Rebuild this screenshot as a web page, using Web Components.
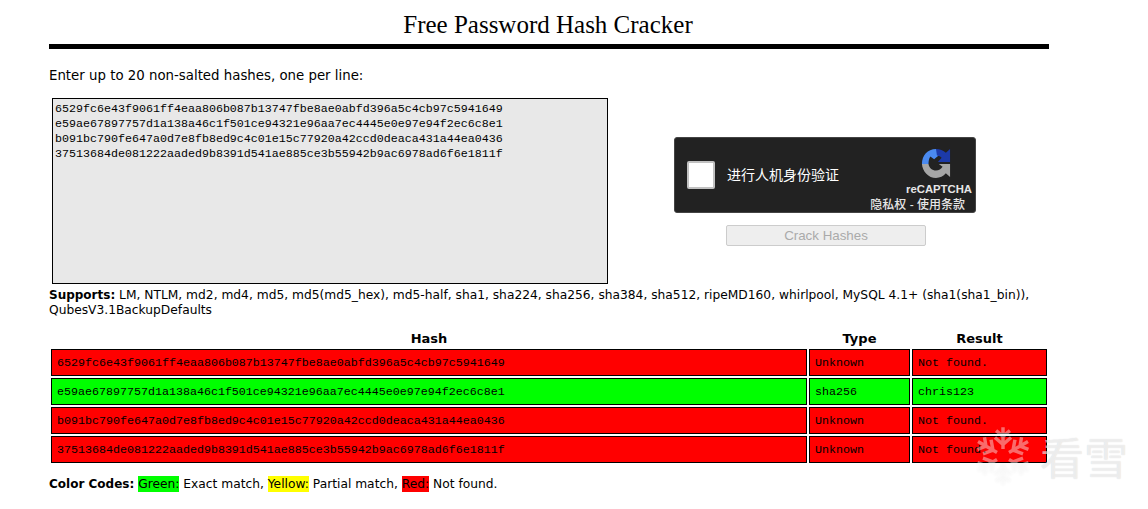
<!DOCTYPE html>
<html lang="en">
<head>
<meta charset="utf-8">
<title>Free Password Hash Cracker</title>
<style>
    html, body { margin: 0; background: #fff; }
    body { font-family: "DejaVu Sans", sans-serif; font-size: 12.26px; color: #000; }
</style>
</head>
<body>
<cracker-page>
    <page-title>Free Password Hash Cracker</page-title>
    <hash-form></hash-form>
    <supports-note></supports-note>
    <hash-results></hash-results>
    <color-codes></color-codes>
</cracker-page>
<snow-watermark></snow-watermark>

<script>
const HASHES = [
    '6529fc6e43f9061ff4eaa806b087b13747fbe8ae0abfd396a5c4cb97c5941649',
    'e59ae67897757d1a138a46c1f501ce94321e96aa7ec4445e0e97e94f2ec6c8e1',
    'b091bc790fe647a0d7e8fb8ed9c4c01e15c77920a42ccd0deaca431a44ea0436',
    '37513684de081222aaded9b8391d541ae885ce3b55942b9ac6978ad6f6e1811f'
];

class CrackerPage extends HTMLElement {
    constructor() {
        super();
        this.attachShadow({ mode: 'open' });
        this.shadowRoot.innerHTML = `
            <style>
                :host { display: block; width: 1000px; margin-left: 49px; }
            </style>
            <slot></slot>
        `;
    }
}

class PageTitle extends HTMLElement {
    constructor() {
        super();
        this.attachShadow({ mode: 'open' });
        this.shadowRoot.innerHTML = `
            <style>
                :host { display: block; height: 44px; padding-right: 2px; border-bottom: 5px solid #000;
                    font: 25px/50px "Liberation Serif", serif; text-align: center; }
            </style>
            <slot></slot>
        `;
    }
}

class HashForm extends HTMLElement {
    constructor() {
        super();
        this.attachShadow({ mode: 'open' });
        this.shadowRoot.innerHTML = `
            <style>
                :host { display: block; }
                p { margin: 0; padding-top: 19px; height: 30px; line-height: 15px; font-size: 13.33px; }
                .row { display: flex; padding-left: 3px; }
                textarea { display: block; box-sizing: border-box; width: 556px; height: 186px; margin: 0; padding: 3px 2px;
                    border: 1px solid #000; border-radius: 0; background: #e8e8e8; color: #000; resize: none; outline: 0;
                    font: 11.67px/15px "Liberation Mono", monospace; overflow: hidden; }
                .side { display: flex; flex-direction: column; align-items: center; padding: 39px 0 0 66px; }
                button { display: block; box-sizing: border-box; width: 200px; height: 21px; margin: 12px 0 0 2px; padding: 0;
                    border: 1px solid #ccc; border-radius: 2px; background: #eee; color: #aaa;
                    font: 13.33px "Liberation Sans", sans-serif; }
            </style>
            <p>Enter up to 20 non-salted hashes, one per line:</p>
            <div class="row">
                <textarea readonly spellcheck="false">${HASHES.join('\n')}</textarea>
                <div class="side">
                    <captcha-box></captcha-box>
                    <button disabled>Crack Hashes</button>
                </div>
            </div>
        `;
    }
}

class CaptchaBox extends HTMLElement {
    constructor() {
        super();
        this.attachShadow({ mode: 'open' });
        this.shadowRoot.innerHTML = `
            <style>
                :host { display: flex; box-sizing: border-box; width: 302px; height: 76px; background: #222;
                    border: 1px solid #444; border-radius: 3px; color: #fff; align-items: center;
                    font-family: "Liberation Sans", "Noto Sans CJK SC", sans-serif; }
                .check { flex: none; box-sizing: border-box; width: 28px; height: 28px; margin: 0 12px; background: #fff;
                    border: 2px solid #c1c1c1; border-radius: 2px; }
                .label { flex: 1; font-size: 14px; white-space: nowrap; padding-bottom: 2px; }
                .brand { flex: none; display: flex; flex-direction: column; align-items: flex-end; align-self: stretch;
                    padding-top: 10px; margin-right: 3px; }
                svg { display: block; width: 32px; height: 32px; margin-right: 20px; }
                .name { font-size: 11.3px; font-weight: bold; line-height: 14px; margin-top: 4px; color: #e6e6e6; }
                .terms { font-size: 12px; line-height: 14px; margin: 2px 7px 0 0; color: #e6e6e6; font-weight: 500; }
            </style>
            <div class="check"></div>
            <div class="label">进行人机身份验证</div>
            <div class="brand">
                <svg viewBox="0 0 32 32">
                    <path d="M1 17C1 8 7 1 16 1L21 6L14 12L10 9C8.5 11 8 14 8 17Z" fill="#4a8af0"/>
                    <path d="M16 1C20 1 24 2.500 26.500 5L31 1V15H18L22 10.500C21 9 19 8 17 8Z" fill="#1c3aa9"/>
                    <path d="M1 17H8C8.500 21 12 24 16 24C19 24 21.500 22.500 23 20L19 17H31V31L26.500 27C24 30 20 32 16 32C8 32 1.500 25 1 17Z" fill="#a6a6a6"/>
                </svg>
                <div class="name">reCAPTCHA</div>
                <div class="terms">隐私权 - 使用条款</div>
            </div>
        `;
    }
}

class SupportsNote extends HTMLElement {
    constructor() {
        super();
        this.attachShadow({ mode: 'open' });
        this.shadowRoot.innerHTML = `
            <style>
                :host { display: block; padding-top: 4px; line-height: 15px; }
                b { font-size: 12px; }
            </style>
            <b>Supports:</b> LM, NTLM, md2, md4, md5, md5(md5_hex), md5-half, sha1, sha224, sha256, sha384, sha512, ripeMD160, whirlpool, MySQL 4.1+ (sha1(sha1_bin)), QubesV3.1BackupDefaults
        `;
    }
}

class HashResults extends HTMLElement {
    constructor() {
        super();
        this.attachShadow({ mode: 'open' });
        const rows = [
            ['red', HASHES[0], 'Unknown', 'Not found.'],
            ['lime', HASHES[1], 'sha256', 'chris123'],
            ['red', HASHES[2], 'Unknown', 'Not found.'],
            ['red', HASHES[3], 'Unknown', 'Not found.']
        ];
        this.shadowRoot.innerHTML = `
            <style>
                :host { display: block; padding-top: 11px; }
                table { width: 1000px; table-layout: fixed; border-collapse: separate; border-spacing: 2px; }
                th { padding: 0; height: 16px; line-height: 15px; font-size: 13px; vertical-align: top; }
                td { box-sizing: border-box; height: 27px; padding: 0 5px; border: 1px solid #000; color: #000;
                    font: 11.67px "Liberation Mono", monospace; white-space: nowrap; overflow: hidden; }
                .red { background: #f00; }
                .lime { background: #0f0; }
            </style>
            <table>
                <colgroup><col style="width:756px"><col style="width:101px"><col style="width:135px"></colgroup>
                <tr><th>Hash</th><th>Type</th><th>Result</th></tr>
                ${rows.map(([color, hash, type, result]) => `
                <tr class="${color}"><td>${hash}</td><td>${type}</td><td>${result}</td></tr>`).join('')}
            </table>
        `;
    }
}

class ColorCodes extends HTMLElement {
    constructor() {
        super();
        this.attachShadow({ mode: 'open' });
        this.shadowRoot.innerHTML = `
            <style>
                :host { display: block; padding-top: 12px; line-height: 15px; }
                b { font-size: 12px; }
                span { padding: 1px 0; }
            </style>
            <b>Color Codes:</b> <span style="background:#0f0">Green:</span> Exact match,
            <span style="background:#ff0">Yellow:</span> Partial match,
            <span style="background:#f00">Red:</span> Not found.
        `;
    }
}

class SnowWatermark extends HTMLElement {
    constructor() {
        super();
        this.attachShadow({ mode: 'open' });
        const spokes = [0, 60, 120, 180, 240, 300].map(a =>
            `<g transform="rotate(${a} 26 26)"><path d="M26 20V1M26 9L20 4M26 9L32 4M26 16L19 10M26 16L33 10"/></g>`).join('');
        this.shadowRoot.innerHTML = `
            <style>
                :host { position: absolute; left: 973px; top: 426px; display: flex; align-items: center; gap: 7px;
                    color: rgba(255,255,255,.6); pointer-events: none;
                    font: 44px/60px "Noto Sans CJK SC", sans-serif;
                    text-shadow: 0 0 1px rgba(0,0,0,.18); }
                svg { width: 60px; height: 60px; flex: none; filter: drop-shadow(0 0 1px rgba(0,0,0,.12)); }
                path { fill: none; stroke: rgba(255,255,255,.42); stroke-width: 3; }
            </style>
            <svg viewBox="0 0 52 52">${spokes}</svg>
            <span>看雪</span>
        `;
    }
}

customElements.define('cracker-page', CrackerPage);
customElements.define('page-title', PageTitle);
customElements.define('hash-form', HashForm);
customElements.define('captcha-box', CaptchaBox);
customElements.define('supports-note', SupportsNote);
customElements.define('hash-results', HashResults);
customElements.define('color-codes', ColorCodes);
customElements.define('snow-watermark', SnowWatermark);
</script>
</body>
</html>
